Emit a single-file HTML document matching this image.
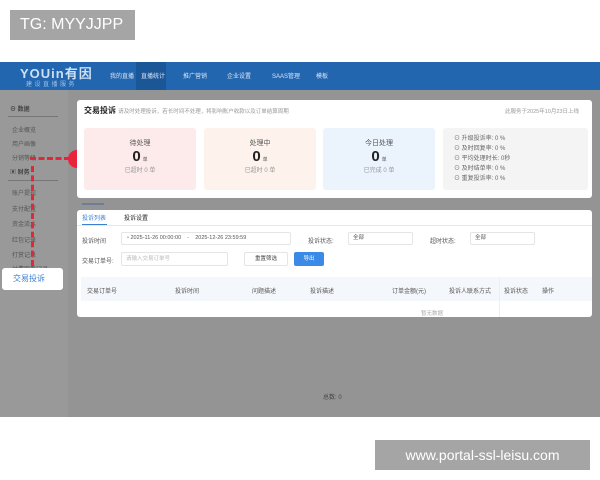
<!DOCTYPE html>
<html><head><meta charset="utf-8"><style>
*{margin:0;padding:0;box-sizing:border-box}
body{width:600px;height:480px;background:#fff;position:relative;overflow:hidden;font-family:"Liberation Sans","Noto Sans CJK SC",sans-serif;color:#333}
.a{position:absolute;white-space:nowrap}
.s{font-size:6px;color:#555}
</style></head><body>
<div class="a" style="left:10px;top:10px;width:125px;height:30px;background:#a5a5a5;color:#fff;font-size:16px;line-height:30px;padding-left:10px">TG: MYYJJPP</div>
<div class="a" style="left:0;top:62px;width:600px;height:28px;background:#2366b0"></div>
<div class="a" style="left:136px;top:62px;width:30px;height:28px;background:#1b5697"></div>
<div class="a" style="left:20px;top:63px;color:#cfe0f3;font-size:13px;font-weight:bold;letter-spacing:1px">YOUin有因</div>
<div class="a" style="left:26px;top:79px;color:#9fc0e6;font-size:6px;letter-spacing:2.5px">建设直播服务</div>
<div class="a" style="top:71px;left:110px;font-size:6px;color:#d8e6f6">我的直播</div>
<div class="a" style="top:71px;left:141px;font-size:6px;color:#d8e6f6">直播统计</div>
<div class="a" style="top:71px;left:183px;font-size:6px;color:#d8e6f6">推广营销</div>
<div class="a" style="top:71px;left:227px;font-size:6px;color:#d8e6f6">企业设置</div>
<div class="a" style="top:71px;left:272px;font-size:6px;color:#d8e6f6">SAAS管理</div>
<div class="a" style="top:71px;left:316px;font-size:6px;color:#d8e6f6">模板</div>
<div class="a" style="left:0;top:90px;width:600px;height:327px;background:#949494"></div>
<div class="a" style="left:0;top:90px;width:68px;height:327px;background:#999"></div>
<div class="a" style="left:10px;top:104px;font-size:6px;color:#444;font-weight:bold">⊖ 数据</div>
<div class="a" style="left:8px;top:116px;width:50px;height:1px;background:#777"></div>
<div class="a s" style="left:12px;top:125px">企业概览</div>
<div class="a s" style="left:12px;top:139px">用户画像</div>
<div class="a s" style="left:12px;top:153px">分销等级</div>
<div class="a" style="left:10px;top:167px;font-size:6px;color:#444;font-weight:bold">▣ 财务</div>
<div class="a" style="left:8px;top:180px;width:50px;height:1px;background:#777"></div>
<div class="a s" style="left:12px;top:188px">账户提现</div>
<div class="a s" style="left:12px;top:204px">支付配置</div>
<div class="a s" style="left:12px;top:219px">资金流水</div>
<div class="a s" style="left:12px;top:235px">红包记录</div>
<div class="a s" style="left:12px;top:250px">打赏记录</div>
<div class="a s" style="left:12px;top:264px">付费观看记录</div>
<div class="a" style="left:2px;top:268px;width:61px;height:22px;background:#fff;border-radius:3px;color:#3a7fd0;font-size:8px;line-height:22px;padding-left:11px">交易投诉</div>
<div class="a" style="left:31px;top:166px;width:3px;height:100px;border-left:3px dashed #e0283a"></div>
<div class="a" style="left:30px;top:157px;width:40px;height:3px;border-top:3px dashed #e0283a"></div>
<div class="a" style="left:68px;top:150px;width:18px;height:18px;border-radius:50%;background:#e8253a"></div>
<div class="a" style="left:77px;top:100px;width:515px;height:98px;background:#fff;border-radius:3px"></div>
<div class="a" style="left:84px;top:105px;font-size:8px;font-weight:bold;color:#222">交易投诉 <span style="font-weight:normal;font-size:5.5px;color:#999">请及时处理投诉，若长时间不处理，将影响账户收款以及订单结算周期</span></div>
<div class="a" style="left:505px;top:107px;font-size:5.5px;color:#999">此服务于2025年10月23日上线</div>
<div class="a" style="left:84px;top:128px;width:112px;height:62px;background:#fcebea;border-radius:3px"></div>
<div class="a" style="left:204px;top:128px;width:112px;height:62px;background:#fdf3ec;border-radius:3px"></div>
<div class="a" style="left:323px;top:128px;width:112px;height:62px;background:#ebf3fd;border-radius:3px"></div>
<div class="a" style="left:443px;top:128px;width:145px;height:62px;background:#f4f4f4;border-radius:3px"></div>
<div class="a" style="left:84px;width:112px;top:138px;text-align:center;font-size:7px;color:#555">待处理<br><b style="font-size:15px;color:#222">0</b> <span style="font-size:5px">单</span><br><span style="font-size:6px;color:#999">已超时 0 单</span></div>
<div class="a" style="left:204px;width:112px;top:138px;text-align:center;font-size:7px;color:#555">处理中<br><b style="font-size:15px;color:#222">0</b> <span style="font-size:5px">单</span><br><span style="font-size:6px;color:#999">已超时 0 单</span></div>
<div class="a" style="left:323px;width:112px;top:138px;text-align:center;font-size:7px;color:#555">今日处理<br><b style="font-size:15px;color:#222">0</b> <span style="font-size:5px">单</span><br><span style="font-size:6px;color:#999">已完成 0 单</span></div>
<div class="a" style="left:454px;top:134px;font-size:6px;line-height:10px;color:#666">⊙ 升级投诉率: 0 %<br>⊙ 及时回复率: 0 %<br>⊙ 平均处理时长: 0秒<br>⊙ 及时结单率: 0 %<br>⊙ 重复投诉率: 0 %</div>
<div class="a" style="left:82px;top:203px;width:22px;height:2px;background:#6a7f96"></div>
<div class="a" style="left:77px;top:210px;width:515px;height:107px;background:#fff;border-radius:3px"></div>
<div class="a" style="left:77px;top:225px;width:515px;height:1px;background:#e8e8e8"></div>
<div class="a" style="left:82px;top:213px;font-size:6px;color:#3a7fd0">投诉列表</div>
<div class="a" style="left:82px;top:224px;width:25px;height:1px;background:#3a7fd0"></div>
<div class="a" style="left:124px;top:213px;font-size:6px;color:#222">投诉设置</div>
<div class="a s" style="left:82px;top:236px">投诉时间</div>
<div class="a" style="left:121px;top:232px;width:170px;height:13px;border:1px solid #e5e5e5;border-radius:2px;font-size:5.5px;color:#555;line-height:11px;padding-left:5px">▫ 2025-11-26 00:00:00 &nbsp;&nbsp; - &nbsp;&nbsp; 2025-12-26 23:59:59</div>
<div class="a s" style="left:308px;top:236px">投诉状态:</div>
<div class="a" style="left:348px;top:232px;width:65px;height:13px;border:1px solid #e5e5e5;border-radius:2px;font-size:5.5px;line-height:11px;padding-left:4px;color:#555">全部</div>
<div class="a s" style="left:430px;top:236px">超时状态:</div>
<div class="a" style="left:470px;top:232px;width:65px;height:13px;border:1px solid #e5e5e5;border-radius:2px;font-size:5.5px;line-height:11px;padding-left:4px;color:#555">全部</div>
<div class="a s" style="left:82px;top:256px">交易订单号:</div>
<div class="a" style="left:121px;top:252px;width:107px;height:14px;border:1px solid #e5e5e5;border-radius:2px;font-size:5.5px;line-height:12px;padding-left:4px;color:#bbb">请输入交易订单号</div>
<div class="a" style="left:244px;top:252px;width:44px;height:14px;border:1px solid #e5e5e5;border-radius:2px;font-size:5.5px;line-height:12px;text-align:center;color:#444">重置筛选</div>
<div class="a" style="left:294px;top:252px;width:30px;height:14px;background:#3b8be6;border-radius:2px;font-size:5.5px;line-height:14px;text-align:center;color:#fff">导出</div>
<div class="a" style="left:81px;top:277px;width:511px;height:24px;background:#f4f7fb"></div>
<div class="a s" style="left:87px;top:286px">交易订单号</div>
<div class="a s" style="left:175px;top:286px">投诉时间</div>
<div class="a s" style="left:252px;top:286px">问题描述</div>
<div class="a s" style="left:310px;top:286px">投诉描述</div>
<div class="a s" style="left:392px;top:286px">订单金额(元)</div>
<div class="a s" style="left:449px;top:286px">投诉人联系方式</div>
<div class="a s" style="left:504px;top:286px">投诉状态</div>
<div class="a s" style="left:542px;top:286px">操作</div>
<div class="a" style="left:499px;top:277px;width:1px;height:40px;background:#eee"></div>
<div class="a" style="left:421px;top:309px;font-size:5.5px;color:#aaa">暂无数据</div>
<div class="a" style="left:323px;top:392px;font-size:6px;color:#444">总数: 0</div>
<div class="a" style="left:375px;top:440px;width:215px;height:30px;background:#a5a5a5;color:#fff;font-size:14px;line-height:30px;text-align:center">www.portal-ssl-leisu.com</div>
</body></html>
